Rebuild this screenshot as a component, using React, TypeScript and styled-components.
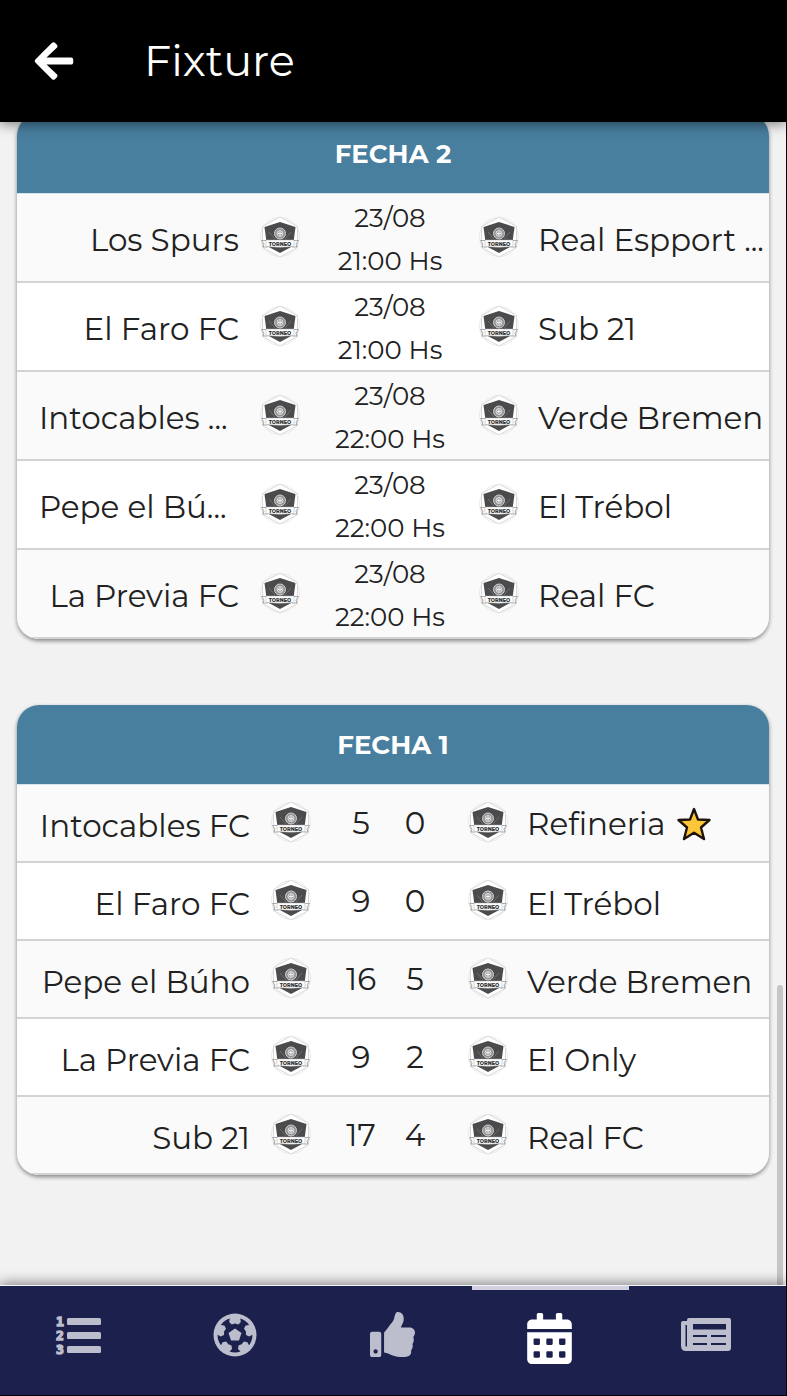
import React from 'react';
import styled, { createGlobalStyle } from 'styled-components';
import { FaArrowLeft, FaThumbsUp, FaCalendarAlt } from 'react-icons/fa';

const Global = createGlobalStyle`
  * { box-sizing: border-box; }
  body { margin: 0; background: #f2f2f2; color: #212121; font-family: Montserrat, Inter, sans-serif; }
`;

const Screen = styled.div`
  height: 100vh;
  display: flex;
  flex-direction: column;
  overflow: hidden;
  border-right: 1px solid #000;
  border-bottom: 1px solid #000;
`;

const TopBar = styled.header`
  flex: none;
  z-index: 1;
  height: 122px;
  padding: 0 32px;
  display: flex;
  align-items: center;
  gap: 68px;
  background: #000;
  color: #fff;
  box-shadow: 0 2px 12px rgba(0, 0, 0, 0.5);
`;

const BackButton = styled.button`
  border: 0;
  padding: 0;
  background: none;
  color: inherit;
  display: flex;
`;

const Title = styled.h1`
  margin: 0;
  font-size: 43px;
  font-weight: 400;
  line-height: 56px;
`;

const Content = styled.main`
  flex: 1;
  min-height: 0;
  position: relative;
  overflow: hidden;
  padding: 0 17px;
`;

const Rounds = styled.div`
  margin-top: -8px;
  display: flex;
  flex-direction: column;
  gap: 66px;
`;

const ScrollThumb = styled.div`
  position: absolute;
  right: 3px;
  bottom: 0;
  width: 6px;
  height: 300px;
  border-radius: 3px 3px 0 0;
  background: #c6c6c6;
`;

const Card = styled.section`
  border-radius: 22px;
  overflow: hidden;
  box-shadow: 0 2px 4px rgba(0, 0, 0, 0.45);
`;

const CardTitle = styled.h2`
  margin: 0;
  height: 80px;
  padding-top: 1px;
  display: flex;
  align-items: center;
  justify-content: center;
  background: #487e9e;
  border-bottom: 1px solid #d5e3ea;
  color: #fff;
  font-size: 26px;
  font-weight: 700;
`;

const Table = styled.table`
  width: 100%;
  table-layout: fixed;
  border-collapse: separate;
  border-spacing: 0;
`;

const Row = styled.tr<{ $height: number }>`
  height: ${(p) => p.$height}px;
  background: #fff;
  &:nth-child(odd) { background: #fafafa; }
`;

const Cell = styled.td<{ $width?: number }>`
  width: ${(p) => (p.$width ? `${p.$width}px` : 'auto')};
  padding: 0;
  box-shadow: inset 0 -2px #d3d3d3;
  text-align: center;
  vertical-align: middle;
  white-space: nowrap;
`;

const Team = styled(Cell)<{ $align: 'left' | 'right' }>`
  text-align: ${(p) => p.$align};
  font-size: 31px;
  line-height: 40px;
  padding: 3px 0 0 ${(p) => (p.$width ? 22 : 0)}px;
  svg { vertical-align: middle; margin: 0 0 6px 11px; }
`;

const Crest = styled.svg`
  display: block;
  width: 42px;
  height: 42px;
  margin: -4px auto 0;
`;

const Kickoff = styled.div`
  padding-top: 3px;
  font-size: 26px;
  line-height: 43px;
`;

const Score = styled.div`
  display: flex;
  justify-content: center;
  padding-right: 4px;
  margin-top: -2px;
  font-size: 31px;
  line-height: 40px;
  span { width: 54px; }
`;

const TabBar = styled.nav`
  flex: none;
  z-index: 1;
  height: 110px;
  display: flex;
  background: #1b204c;
  border-top: 1px solid #f4f4f8;
  box-shadow: 0 -2px 12px rgba(0, 0, 0, 0.45);
`;

const Tab = styled.button<{ $active?: boolean }>`
  flex: 1;
  border: 0;
  border-top: 4px solid ${(p) => (p.$active ? '#d3d0e2' : 'transparent')};
  padding: 0 2px ${(p) => (p.$active ? 8 : 16)}px 0;
  background: none;
  color: ${(p) => (p.$active ? '#fff' : '#bcbdcd')};
  display: flex;
  align-items: center;
  justify-content: center;
`;

const TeamCrest = () => (
  <Crest viewBox="0 0 42 42" aria-hidden="true">
    <path d="M21 1 L38.5 10.5 V31.5 L21 41 L3.5 31.5 V10.5 Z" fill="#fff" stroke="#cfcfcf" strokeWidth="0.8" />
    <circle cx="21" cy="21" r="19.5" fill="none" stroke="#e2e2e2" strokeWidth="0.7" />
    <path d="M21 6 L36.5 11 L34 30 L21 37 L8 30 L5.5 11 Z" fill="#4b4b4d" />
    <path d="M10 16 L16 23 M32 16 L26 23" stroke="#77777a" strokeWidth="0.8" />
    <circle cx="21" cy="17.5" r="5.5" fill="#929294" stroke="#cfcfcf" strokeWidth="1" />
    <circle cx="21" cy="17.5" r="3" fill="#a5a5a7" stroke="#eee" strokeWidth="0.8" />
    <path d="M21 15.5 V19.5 M19 17.5 H23" stroke="#fff" strokeWidth="0.8" />
    <path d="M2.5 24.5 H9 V31 H4 L5 28 Z M39.5 24.5 H33 V31 H38 L37 28 Z" fill="#fff" stroke="#888" strokeWidth="0.7" />
    <path d="M7 24 H35 V30.5 Q21 32 7 30.5 Z" fill="#fff" stroke="#aaa" strokeWidth="0.5" />
    <text x="21" y="29.5" textAnchor="middle" fontSize="5" fontWeight="800" fill="#333" fontFamily="Montserrat, Inter, sans-serif">TORNEO</text>
  </Crest>
);

const Star = () => (
  <svg width="34" height="34" viewBox="0 0 34 34" role="img" aria-label="Destacado">
    <path d="M17 2 L21 12.5 L32.500 13 L24 20.500 L27 32 L17 25.800 L7 32 L10 20.500 L1.500 13 L13 12.500 Z" fill="#fcc638" stroke="#1c140c" strokeWidth="2.400" strokeLinejoin="round" />
  </svg>
);

const ListIcon = () => (
  <svg width="46" height="46" viewBox="0 0 46 46" fill="currentColor" aria-hidden="true">
    <g fontFamily="DejaVu Sans Mono, monospace" fontWeight="700" fontSize="13" stroke="currentColor" strokeWidth="1.4">
      <text x="1" y="14">1</text>
      <text x="1" y="28">2</text>
      <text x="1" y="42">3</text>
    </g>
    <rect x="12" y="6" width="34" height="7" rx="1.500" />
    <rect x="12" y="20" width="34" height="7" rx="1.500" />
    <rect x="12" y="34" width="34" height="7" rx="1.500" />
  </svg>
);

const BallIcon = () => (
  <svg width="44" height="44" viewBox="0 0 44 44" aria-hidden="true">
    <circle cx="22" cy="22" r="21.5" fill="currentColor" />
    {[0, 72, 144, 216, 288].map((a) => (
      <path
        key={a}
        transform={`rotate(${a} 22 22)`}
        fill="#1b204c"
        d="M22 22 L29 31 L25.500 32.500 L25 36 L27.500 38.500 Q22 40.500 16.500 38.500 L19 36 L18.500 32.500 L15 31 Z"
      />
    ))}
    <path fill="currentColor" d="M22 15.5 L28.5 20 L26 27.5 H18 L15.5 20 Z" />
  </svg>
);

const NewsIcon = () => (
  <svg width="50" height="34" viewBox="0 0 50 34" aria-hidden="true">
    <path
      fill="currentColor"
      fillRule="evenodd"
      d="M8 0 H48 Q50 0 50 2 V30 Q50 33 47 33 H5 Q0 33 0 28 V5 Q0 3 2 3 H6 V2 Q6 0 8 0 Z M4.5 7 V28 Q5.300 29.500 6 28 V7 Z M12 6 V11.500 H45 V6 Z M12 17 V19 H26 V17 Z M30 17 V19 H45 V17 Z M12 25 V27 H26 V25 Z M30 25 V27 H45 V25 Z"
    />
  </svg>
);

type Match = { home: string; away: string; middle: [string, string]; star?: boolean };

const upcoming: Match[] = [
  { home: 'Los Spurs', away: 'Real Espport ...', middle: ['23/08', '21:00 Hs'] },
  { home: 'El Faro FC', away: 'Sub 21', middle: ['23/08', '21:00 Hs'] },
  { home: 'Intocables ...', away: 'Verde Bremen', middle: ['23/08', '22:00 Hs'] },
  { home: 'Pepe el Bú...', away: 'El Trébol', middle: ['23/08', '22:00 Hs'] },
  { home: 'La Previa FC', away: 'Real FC', middle: ['23/08', '22:00 Hs'] },
];

const played: Match[] = [
  { home: 'Intocables FC', away: 'Refineria', middle: ['5', '0'], star: true },
  { home: 'El Faro FC', away: 'El Trébol', middle: ['9', '0'] },
  { home: 'Pepe el Búho', away: 'Verde Bremen', middle: ['16', '5'] },
  { home: 'La Previa FC', away: 'El Only', middle: ['9', '2'] },
  { home: 'Sub 21', away: 'Real FC', middle: ['17', '4'] },
];

function Round({ title, matches, scored }: { title: string; matches: Match[]; scored?: boolean }) {
  return (
    <Card>
      <CardTitle>{title}</CardTitle>
      <Table aria-label={title}>
        <tbody>
          {matches.map((m) => (
            <Row key={m.home} $height={scored ? 78 : 89}>
              <Team $align={m.home.endsWith('...') ? 'left' : 'right'} $width={scored ? 233 : 222}>{m.home}</Team>
              <Cell $width={81}><TeamCrest /></Cell>
              <Cell $width={scored ? 118 : 140}>
                {scored ? (
                  <Score><span>{m.middle[0]}</span><span>{m.middle[1]}</span></Score>
                ) : (
                  <Kickoff>{m.middle[0]}<br />{m.middle[1]}</Kickoff>
                )}
              </Cell>
              <Cell $width={78}><TeamCrest /></Cell>
              <Team $align="left">{m.away}{m.star && <Star />}</Team>
            </Row>
          ))}
        </tbody>
      </Table>
    </Card>
  );
}

export default function App() {
  return (
    <Screen>
      <Global />
      <TopBar>
        <BackButton aria-label="Volver"><FaArrowLeft size={44} /></BackButton>
        <Title>Fixture</Title>
      </TopBar>
      <Content>
        <Rounds>
          <Round title="FECHA 2" matches={upcoming} />
          <Round title="FECHA 1" matches={played} scored />
        </Rounds>
        <ScrollThumb />
      </Content>
      <TabBar>
        <Tab aria-label="Posiciones"><ListIcon /></Tab>
        <Tab aria-label="Partidos"><BallIcon /></Tab>
        <Tab aria-label="Votar"><FaThumbsUp size={45} /></Tab>
        <Tab aria-label="Fixture" $active><FaCalendarAlt size={51} /></Tab>
        <Tab aria-label="Noticias"><NewsIcon /></Tab>
      </TabBar>
    </Screen>
  );
}
